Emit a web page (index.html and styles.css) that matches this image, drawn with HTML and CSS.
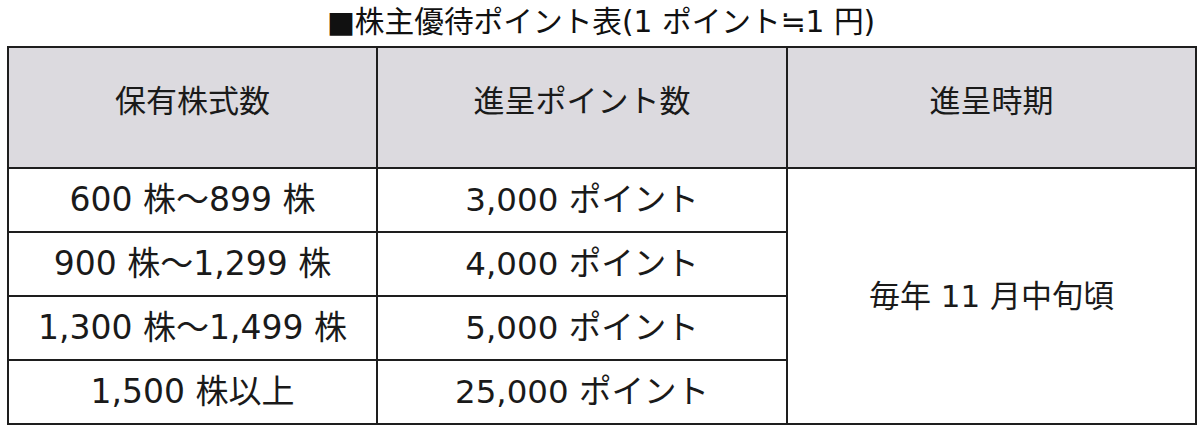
FILE: index.html
```html
<!DOCTYPE html>
<html lang="ja">
<head>
<meta charset="utf-8">
<title>株主優待ポイント表</title>
<link rel="stylesheet" href="styles.css">
</head>
<body>
<h1 class="title">■株主優待ポイント表(1 ポイント≒1 円)</h1>
<table class="points">
  <colgroup>
    <col class="c1">
    <col class="c2">
    <col class="c3">
  </colgroup>
  <thead>
    <tr class="head">
      <th>保有株式数</th>
      <th>進呈ポイント数</th>
      <th>進呈時期</th>
    </tr>
  </thead>
  <tbody>
    <tr>
      <td class="shares">600 株～899 株</td>
      <td class="pts">3,000 ポイント</td>
      <td class="when" rowspan="4">毎年 11 月中旬頃</td>
    </tr>
    <tr>
      <td class="shares">900 株～1,299 株</td>
      <td class="pts">4,000 ポイント</td>
    </tr>
    <tr>
      <td class="shares">1,300 株～1,499 株</td>
      <td class="pts">5,000 ポイント</td>
    </tr>
    <tr>
      <td class="shares">1,500 株以上</td>
      <td class="pts">25,000 ポイント</td>
    </tr>
  </tbody>
</table>
</body>
</html>
```

FILE: styles.css
```css
html, body {
  margin: 0;
  padding: 0;
  background: #ffffff;
}

body {
  padding: 0 5px 0 7px;
  font-family: "Noto Sans CJK JP", "Noto Sans", sans-serif;
  color: #1a1a1a;
}

.title {
  margin: 0;
  height: 46px;
  font-family: "DejaVu Sans", "Noto Sans CJK JP", sans-serif;
  font-size: 29.7px;
  font-weight: normal;
  line-height: 44px;
  text-align: center;
  color: #111111;
}

.points {
  width: 1188px;
  border-collapse: collapse;
  table-layout: fixed;
  border: 2px solid #1e1e1e;
}

.c1 { width: 369px; }
.c2 { width: 410px; }
.c3 { width: 409px; }

.points th,
.points td {
  border: 2px solid #1e1e1e;
  padding: 0;
  text-align: center;
  vertical-align: middle;
  font-weight: normal;
  white-space: nowrap;
}

.head th {
  height: 101px;
  padding-bottom: 18px;
  font-family: "Noto Sans CJK JP", sans-serif;
  font-size: 31px;
  line-height: 44px;
  background: #dcdadf;
}

.points td {
  height: 62px;
  font-family: "DejaVu Sans", "Noto Sans CJK JP", sans-serif;
  font-size: 31px;
  line-height: 44px;
}

.points td.shares {
  font-size: 33px;
}

.points td.pts {
  font-size: 32.5px;
}

.points td.when {
  height: auto;
  font-size: 31px;
}
```
